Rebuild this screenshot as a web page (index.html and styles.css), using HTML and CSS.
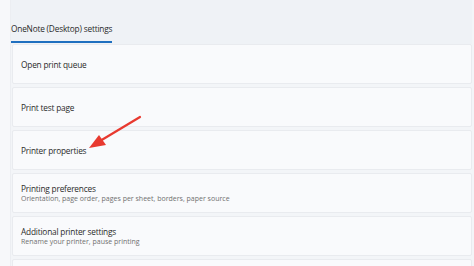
FILE: index.html
```html
<!DOCTYPE html>
<html>
<head>
<meta charset="utf-8">
<link rel="stylesheet" href="styles.css">
</head>
<body>
<div class="page">
  <div class="header">
    <div class="tab">OneNote (Desktop) settings</div>
  </div>
  <div class="list">
    <div class="card"><div class="title">Open print queue</div></div>
    <div class="card"><div class="title">Print test page</div></div>
    <div class="card"><div class="title">Printer properties</div></div>
    <div class="card">
      <div class="title">Printing preferences</div>
      <div class="sub">Orientation, page order, pages per sheet, borders, paper source</div>
    </div>
    <div class="card">
      <div class="title">Additional printer settings</div>
      <div class="sub">Rename your printer, pause printing</div>
    </div>
    <div class="card last"></div>
  </div>
  <svg class="arrow" width="474" height="266" viewBox="0 0 474 266">
    <line x1="140" y1="117" x2="100" y2="141" stroke="#e8392f" stroke-width="2.2" stroke-linecap="round"/>
    <polygon points="89,148 99,135 106,145" fill="#e8392f"/>
  </svg>
</div>
</body>
</html>
```
FILE: styles.css
```css
html, body {
  margin: 0;
  padding: 0;
}
body {
  width: 474px;
  height: 266px;
  overflow: hidden;
  background: #f3f5f8;
  font-family: "Open Sans", "Noto Sans", sans-serif;
  color: #2a2a2a;
}
.page {
  position: relative;
  height: 266px;
  overflow: hidden;
  padding-left: 10px;
  background: linear-gradient(to right, #f7f8fa 0, #f7f8fa 10px, #eceef2 10px, #eceef2 11px, transparent 11px);
}
.header {
  height: 44px;
  background: #eff2f6;
  margin-left: 1px;
  margin-right: 2px;
  display: flex;
  align-items: flex-end;
}
.tab {
  font-size: 8.3px;
  line-height: 12px;
  padding-bottom: 6px;
  border-bottom: 2px solid #1f6fbf;
  margin-bottom: 1px;
  color: #2a2a2a;
  letter-spacing: -0.2px;
}
.list {
  display: flex;
  flex-direction: column;
  gap: 3px;
  margin-left: 2px;
  margin-right: 2px;
}
.card {
  height: 38px;
  flex-shrink: 0;
  background: #f9fafc;
  border: 1px solid #e9ebef;
  border-radius: 2px;
  padding-left: 8px;
  display: flex;
  flex-direction: column;
  justify-content: center;
}
.card.last {
  height: 20px;
}
.title {
  font-size: 8.3px;
  line-height: 11px;
  color: #2a2a2a;
  letter-spacing: -0.2px;
}
.sub {
  font-size: 7px;
  line-height: 10px;
  color: #707070;
}
.arrow {
  position: absolute;
  left: 0;
  top: 0;
  pointer-events: none;
}
```
